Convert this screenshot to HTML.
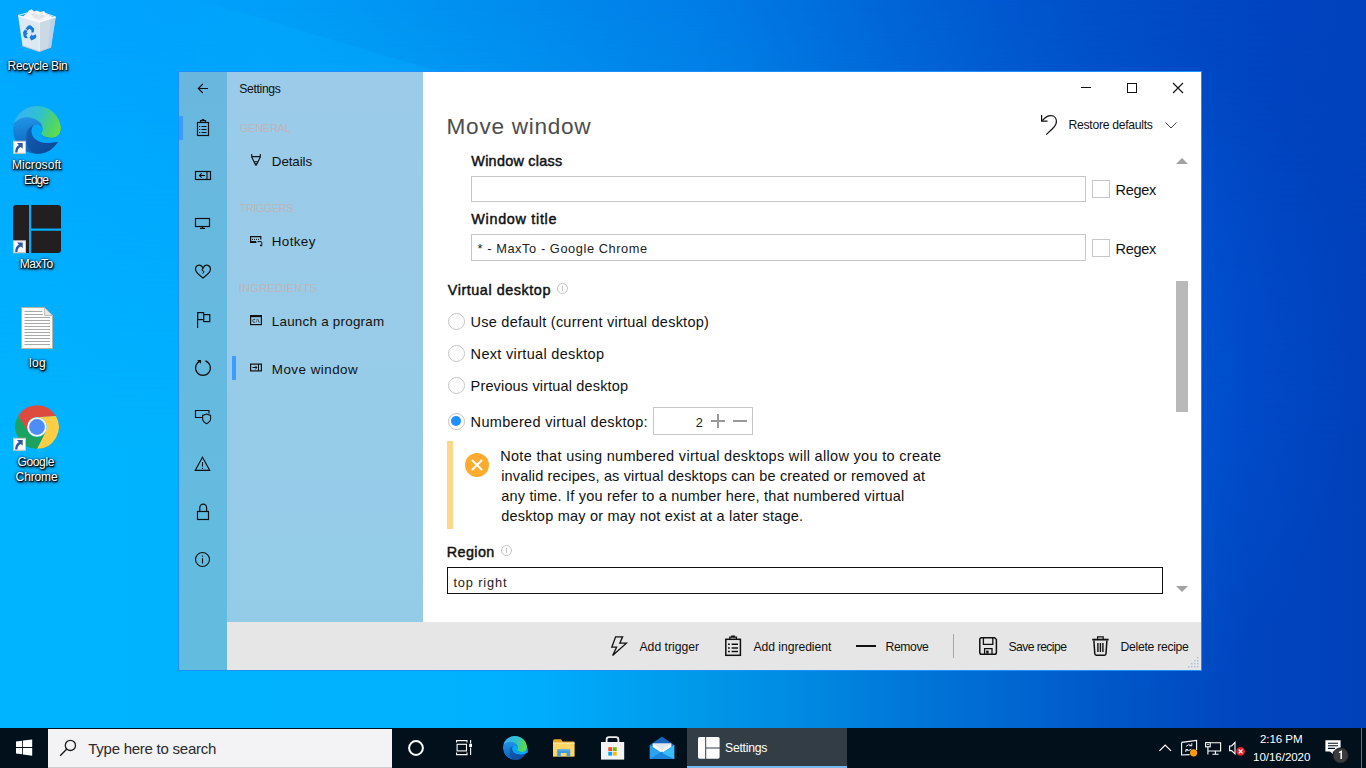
<!DOCTYPE html>
<html>
<head>
<meta charset="utf-8">
<title>Settings</title>
<style>
html,body{margin:0;padding:0;}
body{width:1366px;height:768px;overflow:hidden;position:relative;font-family:"Liberation Sans",sans-serif;background:#0078d7;}
.abs,.t,svg{position:absolute;}
.t{white-space:pre;line-height:normal;}
#wall{left:0;top:0;width:1366px;height:768px;
 background:linear-gradient(90deg,#00a8ff 0px,#00a4ff 100px,#009df7 300px,#008dee 500px,#007de8 700px,#0064d7 900px,#0058d0 1000px,#004fc9 1100px,#0043c0 1280px,#0042bd 1366px);}
#wall2{left:0;top:0;width:1366px;height:768px;
 background:linear-gradient(90deg,#00b4ff 0px,#00b1ff 500px,#00a5f6 600px,#0098e9 700px,#008ae2 800px,#0070d6 950px,#0069d2 1000px,#0058c8 1100px,#0044be 1250px,#0041ba 1366px);
 -webkit-mask-image:linear-gradient(180deg,rgba(0,0,0,0) 0px,rgba(0,0,0,1) 450px);mask-image:linear-gradient(180deg,rgba(0,0,0,0) 0px,rgba(0,0,0,1) 450px);}
.dl{color:#fff;text-shadow:1px 1px 1px rgba(0,0,0,0.95),0 1px 2px rgba(0,0,0,0.95),0 0 3px rgba(0,0,0,0.85),1px 2px 3px rgba(0,0,0,0.6);}
#win{left:178px;top:71px;width:1024px;height:600px;background:#1b8ffb;}
#strip{left:179px;top:72px;width:48px;height:598px;background:linear-gradient(180deg,#69b7df,#62bce0);}
#pane{left:227px;top:72px;width:196px;height:550px;background:linear-gradient(180deg,#9bcbe8,#94cce8);}
#main{left:423px;top:72px;width:778px;height:550px;background:#fff;}
#bar{left:227px;top:622px;width:974px;height:48px;background:#e6e6e6;}
.inp{background:#fff;border:1px solid #c6c6c6;box-sizing:border-box;}
.radio{width:17px;height:17px;border-radius:50%;border:1px solid #c4c4c4;box-sizing:border-box;background:#fff;}
#task{left:0;top:728px;width:1366px;height:40px;background:#02101c;}
</style>
</head>
<body>
<div id="wall" class="abs"></div>
<div id="wall2" class="abs"></div>
<div class="abs" style="left:0;top:0;width:1366px;height:768px;background:radial-gradient(ellipse 200px 330px at 1150px 370px,rgba(0,95,235,0.45),rgba(0,95,235,0))"></div>
<div class="abs" style="left:0;top:0;width:460px;height:80px;background:linear-gradient(90deg,rgba(0,176,255,0) 150px,rgba(0,176,255,0.30) 260px,rgba(0,176,255,0.30) 460px);-webkit-clip-path:polygon(0 0,200px 0,460px 78px,0 78px);clip-path:polygon(0 0,200px 0,460px 78px,0 78px)"></div>

<!-- ================= DESKTOP ICONS ================= -->
<svg id="dicons" style="left:0;top:0" width="1366" height="768" viewBox="0 0 1366 768">
<defs>
<linearGradient id="egTop" gradientUnits="userSpaceOnUse" x1="4" y1="10" x2="46" y2="28"><stop offset="0" stop-color="#3ab3f3"/><stop offset="0.45" stop-color="#2fc2cc"/><stop offset="0.78" stop-color="#4dd36c"/><stop offset="1" stop-color="#66df44"/></linearGradient>
<linearGradient id="egMid" gradientUnits="userSpaceOnUse" x1="10" y1="12" x2="16" y2="47"><stop offset="0" stop-color="#2094e4"/><stop offset="0.5" stop-color="#1578d0"/><stop offset="1" stop-color="#1162b8"/></linearGradient>
<linearGradient id="egDark" gradientUnits="userSpaceOnUse" x1="16" y1="20" x2="40" y2="46"><stop offset="0" stop-color="#1463b6"/><stop offset="0.4" stop-color="#0f55a7"/><stop offset="1" stop-color="#0c4a96"/></linearGradient>
<clipPath id="egClip"><circle cx="24" cy="24" r="24"/></clipPath>
<g id="edge">
  <g clip-path="url(#egClip)">
    <circle cx="24" cy="24" r="24" fill="url(#egMid)"/>
    <path d="M0 18.4 L-1 -1 H49 V22 L47.9 22 C48.3 27 45 31.5 39.8 31.8 C35 32.2 30 31 28.1 28.1 C27.5 26.5 30 25 29.6 22.3 C29 18 27 16 25.2 15 C22 12.5 18 11.3 13.5 11.3 C8 11.5 3 14.5 0 18.4 Z" fill="url(#egTop)"/>
    <path d="M20.6 19 C16.4 21.3 13.3 24.5 13.5 28 C13 32 13.2 36 14.2 39.8 C15.5 43 17.5 45 20.1 46.6 L24 49 H40 L46 36 L44.5 35.6 C40 36.8 33 37.4 27.4 35.9 C23.5 34.5 21 32.3 20 30.5 C18.6 28 18.3 25 18.8 23 C19.2 21.5 19.8 20 20.6 19 Z" fill="url(#egDark)"/>
  </g>
  <path d="M20.6 19.4 C23 18 26.5 18.6 28.3 20.4 C29.5 21.5 29.8 23 29.6 24 C29.3 26 27.3 26.8 28.1 28.4 C30 31.2 35 32.3 39.8 31.9 C43.4 31.6 46.8 28.6 47.8 24.4 L49.5 24 L49.5 33 L44.6 35.7 C40 36.9 33 37.5 27.4 36 C23.5 34.6 21 32.4 20 30.6 C18.6 28.1 18.3 25.1 18.8 23.1 C19.2 21.6 19.8 20.2 20.6 19.4 Z" fill="#00a7fb"/>
</g>
<g id="shortcut">
  <rect x="0.5" y="0.5" width="12" height="12" fill="#fafafa" stroke="#cfc6c0" stroke-width="1"/>
  <path d="M4 2.3 H9.7 V8 L7.9 6.2 C5.6 7 4.6 9 4.4 11.6 H2.2 C2.2 8 3.4 5.6 5.9 4.2 Z" fill="#2e57a6"/>
</g>
</defs>

<!-- Recycle bin -->
<g>
  <path d="M27 13 L29 10.6 L31.5 9.2 L34 11.4 L37 10.6 L40 12 L44 11 L46 13.6 L50 15.4 L54 17.4 L39.3 22.4 L22 17.2 Z" fill="#f4f5f7"/>
  <path d="M18.1 15.5 L39.3 22 L39.3 51.6 L22.5 45.8 Z" fill="#e9ecf1" fill-opacity="0.95"/>
  <path d="M39.3 22 L55.7 17 L51 47.2 L39.3 51.6 Z" fill="#d6dbe4" fill-opacity="0.95"/>
  <path d="M50.5 19 L55.7 17 L51 47.2 L48 48.4 Z" fill="#b9cfe8" fill-opacity="0.9"/>
  <path d="M39.3 22 V51.4" fill="none" stroke="#eceff3" stroke-width="1.2"/>
  <path d="M18.1 15.5 L39.3 22 L55.7 17" fill="none" stroke="#fafbfc" stroke-width="1.3"/>
  <path d="M18.1 15.5 L27 13 M55.7 17 L46 13.6" fill="none" stroke="#dfeaf5" stroke-width="1"/>
  <path d="M31 14 L35 12.4 L38 15.6 L42 13.6 L45.6 16.4 L40 19.6 L34 18 Z" fill="#e2e5ea"/>
  <path d="M22.5 45.8 L39.3 51.6 L51 47.2" fill="none" stroke="#cfc9c6" stroke-width="0.9"/>
  <g fill="#187bd9" stroke="none">
    <path d="M25.6 28.4 L28.4 25.4 Q29.6 24.8 30.8 25.6 L34.2 28.6 L33.8 32.4 L31.2 32.6 L31.6 30.6 L29.4 28.8 L27.6 30.4 Z"/>
    <path d="M23 32.2 L25 29.6 L27.6 31 L26.4 32.4 L28 33.2 L26.2 35 L27.8 38 L25.6 38.2 Q24.2 37.8 23.6 36.6 Z"/>
    <path d="M29.4 37.4 L31.8 34.2 L32.6 35.8 L35.6 34.2 L36.4 36.6 Q36.4 38 35 38.8 L31.4 40.4 Z"/>
  </g>
</g>

<!-- Edge (desktop) -->
<use href="#edge" transform="translate(13,106)"/>
<use href="#shortcut" transform="translate(13,140.8)"/>

<!-- MaxTo (desktop) -->
<g fill="#231f20">
  <path d="M16 205 H29 V253 H16 Q13 253 13 250 V208 Q13 205 16 205 Z"/>
  <path d="M31.2 205 H58 Q61 205 61 208 V228.6 H31.2 Z"/>
  <path d="M31.2 230.8 H61 V250 Q61 253 58 253 H31.2 Z"/>
</g>
<use href="#shortcut" transform="translate(13,240.3)"/>

<!-- log file -->
<g>
  <path d="M21.5 307.5 H44.5 L52.5 315.5 V348.5 H21.5 Z" fill="#fdfdfd" stroke="#b9b1aa" stroke-width="1"/>
  <path d="M44.5 307.5 V315.5 H52.5 Z" fill="#e6e6e6" stroke="#b9b1aa" stroke-width="0.8"/>
  <path d="M24.5 311.5 H42.5 M24.5 314.5 H43 M24.5 317.5 H50 M24.5 320.5 H50 M24.5 323.5 H50 M24.5 326.5 H50 M24.5 329.5 H50 M24.5 332.5 H50 M24.5 335.5 H50 M24.5 338.5 H50 M24.5 341.5 H50 M24.5 344.5 H50" stroke="#a9a9a9" stroke-width="1" fill="none"/>
</g>

<!-- Chrome -->
<g>
  <path d="M18.1 416.1 A21.8 21.8 0 0 1 55.9 416.1 L37 417.2 A9.8 9.8 0 0 0 28.5 431.9 Z" fill="#dd4b3e"/>
  <path d="M55.9 416.1 A21.8 21.8 0 0 1 37 448.8 L45.5 431.9 A9.8 9.8 0 0 0 37 417.2 Z" fill="#ffce43"/>
  <path d="M37 448.8 A21.8 21.8 0 0 1 18.1 416.1 L28.5 431.9 A9.8 9.8 0 0 0 45.5 431.9 Z" fill="#1ba261"/>
  <circle cx="37" cy="427" r="9.8" fill="#f4f4f4"/>
  <circle cx="37" cy="427" r="7.9" fill="#4f8df6"/>
</g>
<use href="#shortcut" transform="translate(13,437.8)"/>
</svg>

<!-- ================= DESKTOP ICON LABELS ================= -->
<span class="t dl" style="left:7.60px;top:58.84px;font-size:12.0px;font-weight:400;color:#fff;letter-spacing:-0.328px;">Recycle Bin</span>
<span class="t dl" style="left:12.00px;top:158.14px;font-size:12.0px;font-weight:400;color:#fff;letter-spacing:0.058px;">Microsoft</span>
<span class="t dl" style="left:24.00px;top:173.14px;font-size:12.0px;font-weight:400;color:#fff;letter-spacing:-1.051px;">Edge</span>
<span class="t dl" style="left:19.80px;top:257.14px;font-size:12.0px;font-weight:400;color:#fff;letter-spacing:-0.467px;">MaxTo</span>
<span class="t dl" style="left:29.00px;top:355.74px;font-size:12.0px;font-weight:400;color:#fff;letter-spacing:0.330px;">log</span>
<span class="t dl" style="left:17.60px;top:454.74px;font-size:12.0px;font-weight:400;color:#fff;letter-spacing:-0.384px;">Google</span>
<span class="t dl" style="left:15.60px;top:469.84px;font-size:12.0px;font-weight:400;color:#fff;letter-spacing:-0.121px;">Chrome</span>

<!-- ================= WINDOW ================= -->
<div id="win" class="abs"></div>
<div id="strip" class="abs"></div>
<div id="pane" class="abs"></div>
<div id="main" class="abs"></div>
<div id="bar" class="abs"></div>

<!-- left strip selection -->
<div class="abs" style="left:179px;top:116px;width:4px;height:24px;background:#3b9dff"></div>
<!-- pane selection -->
<div class="abs" style="left:232px;top:356px;width:4px;height:24px;background:#3b9dff"></div>

<!-- pane text -->
<span class="t" style="left:239.30px;top:82.26px;font-size:12.2px;font-weight:400;color:#111;letter-spacing:-0.349px;">Settings</span>
<span class="t" style="left:239.80px;top:121.95px;font-size:11.0px;font-weight:400;color:#bfb5ba;letter-spacing:-0.259px;">GENERAL</span>
<span class="t" style="left:271.80px;top:153.67px;font-size:13.4px;font-weight:400;color:#111;letter-spacing:-0.089px;">Details</span>
<span class="t" style="left:239.80px;top:202.04px;font-size:11.0px;font-weight:400;color:#bfb5ba;letter-spacing:-0.516px;">TRIGGERS</span>
<span class="t" style="left:271.80px;top:233.67px;font-size:13.4px;font-weight:400;color:#111;letter-spacing:0.384px;">Hotkey</span>
<span class="t" style="left:238.80px;top:281.85px;font-size:11.0px;font-weight:400;color:#bfb5ba;letter-spacing:0.276px;">INGREDIENTS</span>
<span class="t" style="left:271.80px;top:313.87px;font-size:13.4px;font-weight:400;color:#111;letter-spacing:0.245px;">Launch a program</span>
<span class="t" style="left:271.80px;top:361.87px;font-size:13.4px;font-weight:400;color:#111;letter-spacing:0.475px;">Move window</span>

<!-- main heading -->
<span class="t" style="left:446.60px;top:114.45px;font-size:22.6px;font-weight:400;color:#4d4d4d;letter-spacing:0.704px;">Move window</span>
<span class="t" style="left:1068.50px;top:117.86px;font-size:12.2px;font-weight:400;color:#111;letter-spacing:-0.290px;">Restore defaults</span>

<span class="t" style="left:471.30px;top:153.07px;font-size:14.4px;font-weight:400;color:#111;letter-spacing:0.266px;-webkit-text-stroke:0.45px #111;">Window class</span>
<div class="abs inp" style="left:471px;top:176px;width:615px;height:26px"></div>
<div class="abs inp" style="left:1092px;top:180px;width:18px;height:18px"></div>
<span class="t" style="left:1115.60px;top:181.58px;font-size:14.5px;font-weight:400;color:#111;letter-spacing:-0.316px;">Regex</span>

<span class="t" style="left:471.30px;top:211.37px;font-size:14.4px;font-weight:400;color:#111;letter-spacing:0.694px;-webkit-text-stroke:0.45px #111;">Window title</span>
<div class="abs inp" style="left:471px;top:234px;width:615px;height:27px"></div>
<span class="t" style="left:477.50px;top:241.12px;font-size:12.8px;font-weight:400;color:#222;letter-spacing:0.578px;">* - MaxTo - Google Chrome</span>
<div class="abs inp" style="left:1092px;top:239px;width:18px;height:18px"></div>
<span class="t" style="left:1115.60px;top:240.58px;font-size:14.5px;font-weight:400;color:#111;letter-spacing:-0.316px;">Regex</span>

<span class="t" style="left:447.80px;top:281.97px;font-size:14.4px;font-weight:400;color:#111;letter-spacing:0.548px;-webkit-text-stroke:0.45px #111;">Virtual desktop</span>
<div class="abs" style="left:557px;top:283px;width:11px;height:11px;border:1px solid #c4c4c4;border-radius:50%;box-sizing:border-box"></div>
<div class="abs" style="left:562px;top:286px;width:1px;height:5px;background:#c4c4c4"></div>

<div class="abs radio" style="left:447.5px;top:312.5px"></div>
<span class="t" style="left:470.60px;top:313.58px;font-size:14.5px;font-weight:400;color:#111;letter-spacing:0.237px;">Use default (current virtual desktop)</span>
<div class="abs radio" style="left:447.5px;top:344.5px"></div>
<span class="t" style="left:470.60px;top:345.58px;font-size:14.5px;font-weight:400;color:#111;letter-spacing:0.323px;">Next virtual desktop</span>
<div class="abs radio" style="left:447.5px;top:376.5px"></div>
<span class="t" style="left:470.60px;top:377.58px;font-size:14.5px;font-weight:400;color:#111;letter-spacing:0.153px;">Previous virtual desktop</span>
<div class="abs radio" style="left:447.5px;top:412.5px"></div>
<div class="abs" style="left:451px;top:416px;width:10px;height:10px;border-radius:50%;background:#1e90ff"></div>
<span class="t" style="left:470.60px;top:413.58px;font-size:14.5px;font-weight:400;color:#111;letter-spacing:0.324px;">Numbered virtual desktop:</span>
<div class="abs inp" style="left:653px;top:407px;width:100px;height:28px"></div>
<span class="t" style="left:695.70px;top:415.02px;font-size:12.8px;font-weight:400;color:#222;letter-spacing:0.200px;">2</span>
<div class="abs" style="left:711px;top:420px;width:14px;height:2px;background:#999"></div>
<div class="abs" style="left:717px;top:414px;width:2px;height:14px;background:#999"></div>
<div class="abs" style="left:733px;top:420px;width:14px;height:2px;background:#999"></div>

<!-- warning -->
<div class="abs" style="left:447px;top:441px;width:6px;height:88px;background:#ffd68a"></div>
<div class="abs" style="left:465px;top:453px;width:24px;height:24px;border-radius:50%;background:#ffab2e"></div>
<svg style="left:465px;top:453px" width="24" height="24" viewBox="0 0 24 24"><path d="M7.5 7.5 L16.5 16.5 M16.5 7.5 L7.5 16.5" stroke="#fff" stroke-width="2" stroke-linecap="round" fill="none"/></svg>
<span class="t" style="left:500.20px;top:447.78px;font-size:14.5px;font-weight:400;color:#111;letter-spacing:0.310px;">Note that using numbered virtual desktops will allow you to create</span>
<span class="t" style="left:501.20px;top:467.78px;font-size:14.5px;font-weight:400;color:#111;letter-spacing:0.162px;">invalid recipes, as virtual desktops can be created or removed at</span>
<span class="t" style="left:501.20px;top:487.78px;font-size:14.5px;font-weight:400;color:#111;letter-spacing:0.199px;">any time. If you refer to a number here, that numbered virtual</span>
<span class="t" style="left:501.20px;top:507.78px;font-size:14.5px;font-weight:400;color:#111;letter-spacing:0.206px;">desktop may or may not exist at a later stage.</span>

<span class="t" style="left:446.80px;top:544.37px;font-size:14.4px;font-weight:400;color:#111;letter-spacing:0.380px;-webkit-text-stroke:0.45px #111;">Region</span>
<div class="abs" style="left:501px;top:545px;width:11px;height:11px;border:1px solid #c4c4c4;border-radius:50%;box-sizing:border-box"></div>
<div class="abs" style="left:506px;top:548px;width:1px;height:5px;background:#c4c4c4"></div>
<div class="abs" style="left:447px;top:567px;width:716px;height:27px;border:1px solid #111;box-sizing:border-box;background:#fff"></div>
<span class="t" style="left:453.40px;top:574.82px;font-size:12.8px;font-weight:400;color:#222;letter-spacing:0.865px;">top right</span>

<!-- scrollbar -->
<div class="abs" style="left:1176px;top:281px;width:12px;height:131px;background:#b9b9b9"></div>
<svg style="left:1176px;top:158px" width="12" height="6" viewBox="0 0 12 6"><path d="M0 6 L6 0 L12 6 Z" fill="#a2a2a2"/></svg>
<svg style="left:1176px;top:586px" width="12" height="6" viewBox="0 0 12 6"><path d="M0 0 L6 6 L12 0 Z" fill="#a2a2a2"/></svg>

<!-- bottom bar text -->
<span class="t" style="left:639.50px;top:640.26px;font-size:12.2px;font-weight:400;color:#111;letter-spacing:-0.006px;">Add trigger</span>
<span class="t" style="left:753.40px;top:640.26px;font-size:12.2px;font-weight:400;color:#111;letter-spacing:-0.047px;">Add ingredient</span>
<span class="t" style="left:885.60px;top:640.26px;font-size:12.2px;font-weight:400;color:#111;letter-spacing:-0.421px;">Remove</span>
<div class="abs" style="left:856px;top:645px;width:20px;height:2px;background:#111"></div>
<div class="abs" style="left:953px;top:634px;width:1px;height:24px;background:#a6a6a6"></div>
<span class="t" style="left:1008.40px;top:640.26px;font-size:12.2px;font-weight:400;color:#111;letter-spacing:-0.578px;">Save recipe</span>
<span class="t" style="left:1120.60px;top:640.26px;font-size:12.2px;font-weight:400;color:#111;letter-spacing:-0.294px;">Delete recipe</span>

<!-- ================= WINDOW ICONS ================= -->
<svg id="wicons" style="left:0;top:0" width="1366" height="768" viewBox="0 0 1366 768" fill="none" stroke="#111" stroke-width="1.2" stroke-linecap="butt" stroke-linejoin="miter">
<!-- back arrow -->
<path d="M208 88.5 H198.5 M202.8 84 L198.3 88.5 L202.8 93" stroke-width="1.1"/>
<!-- window controls -->
<path d="M1081 87.5 H1091" stroke-width="1"/>
<rect x="1127.5" y="83.5" width="9" height="9" stroke-width="1"/>
<path d="M1173 83 L1183 93 M1183 83 L1173 93" stroke-width="1.1"/>
<!-- undo + chevron -->
<path d="M1041.6 115 V121.2 H1047.5" stroke-width="1.2"/>
<path d="M1042.3 120.6 C1045 117.2 1048.3 115.6 1051 115.6 C1054.4 115.6 1056.4 118.4 1056.4 121.4 C1056.4 124.6 1054.4 126.8 1052.4 128.7 L1046.2 134.6" stroke-width="1.2"/>
<path d="M1165.5 122.5 L1171 128 L1176.5 122.5" stroke="#444" stroke-width="1"/>

<!-- NAV 1: clipboard -->
<rect x="197.5" y="122.5" width="11" height="13"/>
<path d="M200.5 122.5 V120.7 H205.5 V122.5" />
<path d="M202 120.5 V119.6 H204 V120.5" stroke-width="1"/>
<path d="M201.5 126.5 H206.5 M201.5 129.5 H206.5 M201.5 132.5 H206.5 M199 126.5 H200.2 M199 129.5 H200.2 M199 132.5 H200.2" stroke-width="1.1"/>
<!-- NAV 2: window-left -->
<rect x="195.5" y="171.5" width="15" height="8"/>
<path d="M207 171.5 V179.5 M205 175.5 H199.5 M201.7 173.3 L199.5 175.5 L201.7 177.7" stroke-width="1.1"/>
<!-- NAV 3: monitor -->
<rect x="195.5" y="218.5" width="14" height="8"/>
<path d="M202.5 226.5 V228.3 M200 228.4 H205" stroke-width="1.1"/>
<!-- NAV 4: broken heart -->
<path d="M203 268 C201.6 265 199.6 264.9 198.6 265.2 C196.6 265.7 195.5 267.4 195.5 269.3 C195.5 272.8 199.8 275.6 203 278 C206.2 275.6 210.5 272.8 210.5 269.3 C210.5 267.4 209.4 265.7 207.4 265.2 C206.4 264.9 204.4 265 203 268 Z"/>
<path d="M203 268 L201.8 270.2 L204 271.6 L202.8 273.6" stroke-width="1"/>
<!-- NAV 5: flag -->
<path d="M197.6 312 V328" stroke-width="1.2"/>
<rect x="197.6" y="312.6" width="6" height="7"/>
<rect x="203.6" y="314.6" width="6.2" height="7"/>
<!-- NAV 6: refresh -->
<path d="M200.6 360.9 A7.4 7.4 0 1 0 205.4 360.9" stroke-width="1.2"/>
<path d="M197.2 360 H201 V363.8 Z" fill="#111" stroke="none"/>
<!-- NAV 7: screen + shield -->
<path d="M202.5 417.5 H195.5 V410.5 H209 V413.5" />
<path d="M206.6 414 L210.6 415.4 V418.6 C210.6 421.3 208.6 422.8 206.6 423.7 C204.6 422.8 202.6 421.3 202.6 418.6 V415.4 Z" stroke-width="1.1"/>
<!-- NAV 8: warning -->
<path d="M202.5 457.2 L209.8 470.4 H195.2 Z" stroke-width="1.1"/>
<path d="M202.5 462 V466.6 M202.5 467.8 V469" stroke-width="1"/>
<!-- NAV 9: lock -->
<rect x="197.5" y="511.5" width="11" height="8"/>
<path d="M199.8 511.5 V507.8 A3.4 3.6 0 0 1 206.6 507.8 V511.5" />
<!-- NAV 10: info -->
<circle cx="202.5" cy="559.5" r="7" stroke-width="1.1"/>
<path d="M202.5 558.2 V563.6 M202.5 555.4 V556.8" stroke-width="1.1"/>

<!-- PANE: details (pencil) -->
<path d="M251.7 154 V157 L255.6 165 H256.4 L260.3 157 V154 M251.7 156.6 H260.3 M254.2 161.8 H257.8" stroke-width="1.1"/>
<path d="M254.9 163.2 H257.1 L256 165.8 Z" fill="#111" stroke="none"/>
<!-- PANE: hotkey -->
<path d="M260.8 239.5 V236.6 H250.6 V242.3 H256.5" stroke-width="1.2"/>
<path d="M252 239.4 H259.5" stroke-width="1" stroke-dasharray="1 1"/>
<path d="M251 241.7 H256" stroke-width="1.3"/>
<path d="M257.5 241.6 H261 Q261.8 241.6 261.8 242.6 V244.5" stroke-width="1"/>
<rect x="260" y="244.6" width="2.2" height="1.6" fill="#111" stroke="none"/>
<!-- PANE: launch -->
<rect x="250.6" y="315.6" width="10.8" height="9" stroke-width="1.2"/>
<rect x="250" y="315" width="12" height="2.2" fill="#111" stroke="none"/>
<path d="M255.2 319.4 H253.6 Q252.8 319.4 252.8 320.4 V321.2 Q252.8 322.2 253.6 322.2 H255.2 M256.5 319.6 V320.4 M256.5 321.4 V322.2 M257.6 318.8 L259.2 322.6" stroke="#222" stroke-width="0.8"/>
<!-- PANE: move window -->
<rect x="250.6" y="364.1" width="10.8" height="6.8" stroke-width="1.2"/>
<path d="M258.5 364 V371 M252.5 367.5 H257 M255.3 365.8 L257 367.5 L255.3 369.2" stroke-width="1"/>

<!-- BOTTOM: lightning -->
<path d="M615.6 636.8 H622.6 L619.8 643.2 H626.4 L612.6 655.6 L616.6 647.2 H611.8 Z" stroke-width="1.3" stroke-linejoin="miter"/>
<!-- BOTTOM: clipboard -->
<rect x="725.8" y="639.3" width="14.6" height="16" stroke-width="1.5"/>
<path d="M729.8 639.3 V637.2 H736.4 V639.3 M731.8 637 V636.2 H734.4 V637" stroke-width="1.3"/>
<path d="M731.6 644.3 H738 M731.6 647.9 H738 M731.6 651.5 H738 M728 644.3 H729.8 M728 647.9 H729.8 M728 651.5 H729.8" stroke-width="1.5"/>
<!-- BOTTOM: save -->
<path d="M981.6 637.7 H994.6 L996.4 639.5 V652.4 Q996.4 654.2 994.6 654.2 H981.6 Q979.8 654.2 979.8 652.4 V639.5 Q979.8 637.7 981.6 637.7 Z" stroke-width="1.5"/>
<path d="M983.4 638 V644.3 H992.8 V638" stroke-width="1.3"/>
<path d="M984.6 654 V648.6 H992 V654" stroke-width="1.3"/>
<rect x="986.2" y="650.6" width="2.4" height="3" fill="#111" stroke="none"/>
<!-- BOTTOM: trash -->
<path d="M1092.2 639.6 H1108.6" stroke-width="1.8"/>
<path d="M1097.6 639 V636.8 H1103.2 V639" stroke-width="1.2"/>
<path d="M1093.9 640.5 L1094.8 653.8 Q1094.9 655.2 1096.2 655.2 H1104.6 Q1105.9 655.2 1106 653.8 L1106.9 640.5" stroke-width="1.5"/>
<path d="M1097.9 643 V652 M1100.4 643 V652 M1102.9 643 V652" stroke-width="1.4"/>
<!-- resize grip -->
<g stroke="none" fill="#a9bdd6">
<rect x="1197" y="657" width="1.4" height="1.4"/>
<rect x="1194" y="660" width="1.4" height="1.4"/><rect x="1197" y="660" width="1.4" height="1.4"/>
<rect x="1191" y="663" width="1.4" height="1.4"/><rect x="1194" y="663" width="1.4" height="1.4"/><rect x="1197" y="663" width="1.4" height="1.4"/>
<rect x="1188" y="666" width="1.4" height="1.4"/><rect x="1191" y="666" width="1.4" height="1.4"/><rect x="1194" y="666" width="1.4" height="1.4"/><rect x="1197" y="666" width="1.4" height="1.4"/>
</g>

</svg>

<!-- ================= TASKBAR ================= -->
<div id="task" class="abs"></div>
<div class="abs" style="left:48px;top:729px;width:344px;height:39px;background:#f3f2f4;border-bottom:1px solid #cfcfd2;box-sizing:border-box"></div>
<span class="t" style="left:88.20px;top:740.02px;font-size:15.0px;font-weight:400;color:#2b2b2b;letter-spacing:-0.246px;">Type here to search</span>
<div class="abs" style="left:687px;top:728px;width:160px;height:40px;background:#323d45"></div>
<div class="abs" style="left:687px;top:766px;width:160px;height:2px;background:#76b9ed"></div>
<span class="t" style="left:725.00px;top:740.76px;font-size:12.2px;font-weight:400;color:#fff;letter-spacing:-0.249px;">Settings</span>
<span class="t" style="left:1260.00px;top:732.30px;font-size:11.6px;font-weight:400;color:#fff;letter-spacing:-0.103px;">2:16 PM</span>
<span class="t" style="left:1253.10px;top:750.20px;font-size:11.6px;font-weight:400;color:#fff;letter-spacing:-0.075px;">10/16/2020</span>
<div class="abs" style="left:1361px;top:728px;width:1px;height:40px;background:#6a6f78"></div>

<!-- ================= TASKBAR ICONS ================= -->
<svg id="ticons" style="left:0;top:0" width="1366" height="768" viewBox="0 0 1366 768" fill="none">
<!-- windows logo -->
<g fill="#fff">
  <path d="M16 741.6 L22.2 740.7 V747 H16 Z"/>
  <path d="M23 740.6 L32.2 739.4 V747 H23 Z"/>
  <path d="M16 747.9 H22.2 V754.3 L16 753.4 Z"/>
  <path d="M23 747.9 H32.2 V755.8 L23 754.4 Z"/>
</g>
<!-- search icon -->
<circle cx="70.4" cy="745.4" r="5.1" stroke="#1d1d1d" stroke-width="1.3"/>
<path d="M66.8 749.1 L60.2 755.8" stroke="#1d1d1d" stroke-width="1.4"/>
<!-- cortana -->
<circle cx="416" cy="748" r="6.9" stroke="#fff" stroke-width="2"/>
<!-- task view -->
<g stroke="#fff" stroke-width="1.1">
  <rect x="457.1" y="744.3" width="9.4" height="6.6"/>
  <path d="M456.6 742.6 V740.6 H467 V742.6 M456.6 752.6 V754.6 H467 V752.6"/>
  <path d="M470.6 740 V743.6 M470.6 747.6 V755"/>
</g>
<rect x="469.2" y="743.8" width="2.8" height="3.2" fill="#fff"/>
<!-- edge (taskbar) -->
<use href="#edge" transform="translate(503,736) scale(0.5)"/>
<!-- explorer -->
<g>
  <path d="M553 741 Q553 739.2 554.6 739.2 H561 L562.6 741.4 H574.4 V756.4 H553 Z" fill="#eaa822"/>
  <path d="M553 742.6 H574.4 V756.4 H553 Z" fill="#ffd766"/>
  <path d="M553 742.6 H574.4 V744 H553 Z" fill="#ffe394"/>
  <path d="M557.2 749.4 H570.2 V756.4 H566.6 V753 H560.8 V756.4 H557.2 Z" fill="#3f9be3"/>
  <path d="M557.2 749.4 H570.2 V750.8 H557.2 Z" fill="#58aef0"/>
</g>
<!-- store -->
<g>
  <path d="M606.6 742.5 V739.6 Q606.6 737.2 609 737.2 H616 Q618.4 737.2 618.4 739.6 V742.5" stroke="#ededed" stroke-width="1.8"/>
  <rect x="601" y="742" width="23.2" height="17.6" fill="#f3f3f3"/>
  <rect x="608.3" y="747.2" width="3.8" height="3.8" fill="#f25022"/>
  <rect x="612.9" y="747.2" width="3.8" height="3.8" fill="#7fba00"/>
  <rect x="608.3" y="751.8" width="3.8" height="3.8" fill="#00a4ef"/>
  <rect x="612.9" y="751.8" width="3.8" height="3.8" fill="#ffb900"/>
</g>
<!-- mail -->
<g>
  <path d="M649.8 745 L662 736.4 L674.2 745 V759 H649.8 Z" fill="#1565bd"/>
  <path d="M652.6 743.6 H671.4 V752 H652.6 Z" fill="#f5f7fa"/>
  <path d="M652.6 743.6 H671.4 L662 750 Z" fill="#dfe6ee"/>
  <path d="M649.8 745 L662 753 L674.2 745 V759 H649.8 Z" fill="#2ba2f3"/>
  <path d="M649.8 759 L662 751.6 L674.2 759 Z" fill="#1b86de"/>
  <path d="M674.2 745 L662 753 L674.2 759 Z" fill="#38bdf8"/>
</g>
<!-- maxto (taskbar, white) -->
<g fill="#fdfdfd">
  <path d="M699.6 737 H705.2 V758.7 H699.6 Q698 758.7 698 757.1 V738.6 Q698 737 699.6 737 Z"/>
  <path d="M706.2 737 H718 Q719.6 737 719.6 738.6 V747.4 H706.2 Z"/>
  <path d="M706.2 748.4 H719.6 V757.1 Q719.6 758.7 718 758.7 H706.2 Z"/>
</g>
<!-- tray chevron -->
<path d="M1159.4 750.8 L1165.2 745 L1171 750.8" stroke="#fff" stroke-width="1.2"/>
<!-- tray: sync w/ orange dot -->
<g stroke="#fff" stroke-width="1.1">
  <path d="M1181.6 742.4 L1196.6 740.4 V750 M1189.6 754.6 L1181.6 755 V742.4"/>
  <path d="M1186 746.4 Q1188.6 743.4 1191.6 745.6 M1191.8 743.2 V745.8 H1189.4 M1191.4 749 Q1188.8 751.8 1186 749.8 M1185.8 752 V749.6 H1188.2" stroke-width="0.9"/>
</g>
<circle cx="1193.6" cy="752.8" r="3.6" fill="#ff9d0a"/>
<!-- tray: network -->
<g stroke="#fff" stroke-width="1.1">
  <path d="M1210.6 742.8 H1220.6 V751 H1210.6"/>
  <rect x="1205.6" y="742.6" width="4.6" height="4.2"/>
  <path d="M1207.9 746.8 V754.4 M1207.9 751 H1210.6 M1215.4 751 V754 M1212.4 754.3 H1218.6"/>
  <path d="M1206.8 744.4 H1209" stroke-width="0.8"/>
</g>
<!-- tray: volume -->
<path d="M1229.6 746 H1231.6 L1235 742.4 V754 L1231.6 750.6 H1229.6 Z" stroke="#fff" stroke-width="1.1"/>
<circle cx="1240.6" cy="751.4" r="4.3" fill="#e8202a"/>
<path d="M1238.7 749.5 L1242.5 753.3 M1242.5 749.5 L1238.7 753.3" stroke="#fff" stroke-width="1.2"/>
<!-- notification -->
<path d="M1325.4 740.2 H1340.6 V751.6 H1332.8 V754 L1330 751.6 H1325.4 Z" fill="#fff"/>
<path d="M1328 743.2 H1338 M1328 745.8 H1338 M1328 748.4 H1335" stroke="#02101c" stroke-width="1.1"/>
<circle cx="1340.6" cy="755.4" r="7.6" fill="#3a3b3d" stroke="#1d1e20" stroke-width="0.8"/>
<path d="M1339 752.6 L1341.2 751.4 V759" stroke="#fff" stroke-width="1.5"/>
</svg>

</body>
</html>
